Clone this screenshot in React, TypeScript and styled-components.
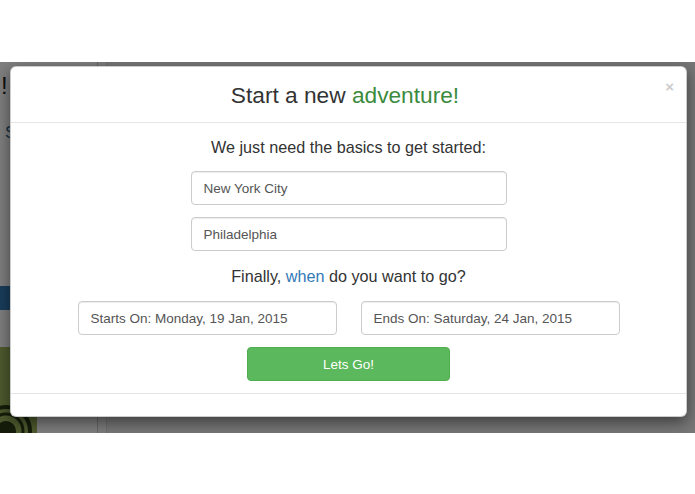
import styled, { createGlobalStyle } from 'styled-components';

const GlobalStyle = createGlobalStyle`
  html, body {
    margin: 0;
    padding: 0;
    background: #ffffff;
    font-family: "Liberation Sans", Arial, Helvetica, sans-serif;
    color: #333333;
  }
  * {
    box-sizing: border-box;
  }
`;

export const Page = styled.div`
  width: 695px;
  height: 494px;
  display: flex;
  flex-direction: column;
  background: #ffffff;
`;

export const Stage = styled.div`
  position: relative;
  margin-top: 62px;
  height: 371px;
  overflow: hidden;
`;

// the page that sits under the dimmed backdrop
export const Underlay = styled.div`
  display: flex;
  height: 100%;
  background: #eeeeee;
`;

export const Sidebar = styled.div`
  width: 97px;
  flex-shrink: 0;
  background: #ffffff;
  display: flex;
  flex-direction: column;
  padding-top: 10px;
`;

export const Brand = styled.div`
  padding-left: 1px;
  font-size: 24px;
  line-height: 28px;
  color: #222222;
`;

export const NavLink = styled.a`
  margin-top: 23px;
  padding-left: 5px;
  font-size: 17px;
  line-height: 20px;
  color: #2a5f8f;
  white-space: nowrap;
`;

export const ActiveBar = styled.div`
  margin-top: 143px;
  height: 25px;
  background: #337ab7;
`;

export const Thumb = styled.div`
  margin-top: 37px;
  width: 37px;
  height: 90px;
  background: #9cb45c;
  overflow: hidden;
`;

export const Divider = styled.div`
  width: 10px;
  flex-shrink: 0;
  background: #fafafa;
  border-left: 1px solid #cfcfcf;
  border-right: 1px solid #dddddd;
`;

export const Backdrop = styled.div`
  position: absolute;
  inset: 0;
  background: rgba(0, 0, 0, 0.5);
`;

export const Modal = styled.div`
  position: absolute;
  top: 4px;
  left: 10px;
  width: 677px;
  background: #ffffff;
  border: 1px solid rgba(0, 0, 0, 0.2);
  border-radius: 6px;
  box-shadow: 0 5px 15px rgba(0, 0, 0, 0.5);
`;

export const Header = styled.div`
  position: relative;
  padding: 16px 22px 14px 15px;
  border-bottom: 1px solid #e5e5e5;
`;

export const Title = styled.h3`
  margin: 0;
  text-align: center;
  font-size: 22.7px;
  line-height: 25px;
  font-weight: 400;
  color: #333333;
`;

export const Accent = styled.span<{ tone: 'green' | 'blue' }>`
  color: ${(props) => (props.tone === 'green' ? '#3b8a3e' : '#337ab7')};
`;

export const Close = styled.button`
  position: absolute;
  top: 12px;
  right: 12px;
  padding: 0;
  border: 0;
  background: transparent;
  font-family: "Liberation Sans", Arial, sans-serif;
  font-size: 15px;
  font-weight: 700;
  line-height: 15px;
  color: #000000;
  opacity: 0.2;
`;

export const Body = styled.div`
  display: flex;
  flex-direction: column;
  align-items: center;
  padding: 13px 15px 12px;
`;

export const Lead = styled.p<{ gap?: number }>`
  margin: ${(props) => props.gap || 0}px 0 0;
  font-size: 16.2px;
  line-height: 22px;
  color: #333333;
  text-align: center;
`;

export const Field = styled.input<{ size: number; gap: number }>`
  display: block;
  width: ${(props) => props.size}px;
  height: 34px;
  margin-top: ${(props) => props.gap}px;
  padding: 6px 12px;
  font-family: "Liberation Sans", Arial, sans-serif;
  font-size: 13.5px;
  color: #555555;
  background: #ffffff;
  border: 1px solid #cccccc;
  border-radius: 4px;
  box-shadow: inset 0 1px 1px rgba(0, 0, 0, 0.075);
  outline: none;
`;

export const DateRow = styled.div`
  display: flex;
  gap: 24px;
  margin-top: 14px;
`;

export const GoButton = styled.button`
  width: 203px;
  height: 34px;
  margin-top: 12px;
  font-family: "Liberation Sans", Arial, sans-serif;
  font-size: 13.5px;
  color: #ffffff;
  background: #5cb85c;
  border: 1px solid #4cae4c;
  border-radius: 4px;
`;

export const Footer = styled.div`
  height: 23px;
  border-top: 1px solid #e5e5e5;
`;

function App() {
  return (
    <Page>
      <GlobalStyle />
      <Stage>
        <Underlay>
          <Sidebar>
            <Brand>!</Brand>
            <NavLink>Search trips</NavLink>
            <ActiveBar />
            <Thumb>
              <svg width="37" height="90" viewBox="0 0 37 90">
                <circle cx="6" cy="84" r="24" fill="none" stroke="#2b3a14" strokeWidth="4" />
                <circle cx="6" cy="84" r="17" fill="none" stroke="#2b3a14" strokeWidth="3" />
                <circle cx="6" cy="84" r="10" fill="#2b3a14" />
              </svg>
            </Thumb>
          </Sidebar>
          <Divider />
        </Underlay>
        <Backdrop />
        <Modal>
          <Header>
            <Title>
              Start a new <Accent tone="green">adventure!</Accent>
            </Title>
            <Close aria-label="Close">×</Close>
          </Header>
          <Body>
            <Lead>We just need the basics to get started:</Lead>
            <Field size={316} gap={13} defaultValue="New York City" />
            <Field size={316} gap={12} defaultValue="Philadelphia" />
            <Lead gap={14}>
              Finally, <Accent tone="blue">when</Accent> do you want to go?
            </Lead>
            <DateRow>
              <Field size={259} gap={0} defaultValue="Starts On: Monday, 19 Jan, 2015" />
              <Field size={259} gap={0} defaultValue="Ends On: Saturday, 24 Jan, 2015" />
            </DateRow>
            <GoButton>Lets Go!</GoButton>
          </Body>
          <Footer />
        </Modal>
      </Stage>
    </Page>
  );
}

export default App;
